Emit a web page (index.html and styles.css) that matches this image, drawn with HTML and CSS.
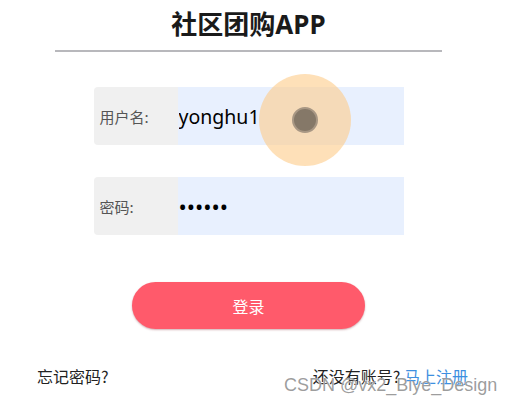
FILE: index.html
```html
<!DOCTYPE html>
<html lang="zh-CN">
<head>
    <meta charset="UTF-8">
    <meta name="viewport" content="width=device-width, initial-scale=1.0">
    <title>社区团购APP</title>
    <link rel="stylesheet" href="styles.css">
</head>
<body>
    <div class="page">
        <h1>社区团购APP</h1>
        <div class="divider"></div>

        <div class="form">
            <div class="field">
                <label for="username">用户名:</label>
                <input type="text" id="username" value="yonghu1">
            </div>
            <div class="field">
                <label for="password">密码:</label>
                <input type="password" id="password" value="123456">
            </div>
            <button class="login">登录</button>
        </div>

        <div class="footer">
            <span>忘记密码?</span>
            <span>还没有账号? <a href="#">马上注册</a></span>
        </div>
    </div>

    <div class="touch"><div class="dot"></div></div>
    <div class="watermark">CSDN @vx2_Biye_Design</div>
</body>
</html>
```

FILE: styles.css
```css
body {
    margin: 0;
    font-family: "Noto Sans", "Noto Sans CJK SC", sans-serif;
    color: #222;
    background: #fff;
}
.page {
    width: 497px;
}
h1 {
    margin: 0;
    padding-top: 7px;
    font-size: 26px;
    line-height: 34px;
    text-align: center;
    color: #1a1a1a;
}
.divider {
    margin: 9px 55px 0;
    border-top: 2px solid #b8b8bc;
}
.form {
    width: 310px;
    margin: 35px auto 0;
}
.field {
    display: flex;
    height: 58px;
    margin-bottom: 32px;
}
.field label {
    flex: 0 0 84px;
    box-sizing: border-box;
    padding-left: 6px;
    display: flex;
    align-items: center;
    background-color: #f0f0f0;
    border-radius: 4px 0 0 4px;
    font-family: "Noto Sans CJK SC", sans-serif;
    font-size: 15px;
    color: #555;
}
.field input {
    flex: 1;
    min-width: 0;
    width: 0;
    border: none;
    outline: none;
    margin: 0;
    padding: 0 1px;
    background-color: #e8f0fe;
    font-family: "Noto Sans", "Noto Sans CJK SC", sans-serif;
    font-size: 19.5px;
    color: #000;
}
.field input[type="password"] {
    font-size: 22px;
    letter-spacing: 0;
}
.login {
    display: block;
    width: 233px;
    height: 47px;
    margin: 47px auto 0;
    border: none;
    border-radius: 24px;
    background-color: #ff5a6b;
    box-shadow: 0 1px 2px rgba(120, 30, 40, 0.35);
    color: #fff;
    font-family: "Noto Sans CJK SC", sans-serif;
    font-size: 16px;
}
.footer {
    display: flex;
    justify-content: space-between;
    padding: 35px 29px 0 37px;
    font-family: "Noto Sans CJK SC", sans-serif;
    font-size: 16px;
    color: #222;
}
.footer a {
    color: #3d8fe0;
    text-decoration: none;
}
.touch {
    position: absolute;
    left: 259px;
    top: 74px;
    width: 92px;
    height: 92px;
    border-radius: 50%;
    background-color: rgba(253, 205, 140, 0.62);
    display: flex;
    align-items: center;
    justify-content: center;
}
.dot {
    width: 22px;
    height: 22px;
    border-radius: 50%;
    background-color: #857868;
    border: 2px solid #a89784;
}
.watermark {
    position: absolute;
    left: 284px;
    top: 375px;
    font-family: "Liberation Sans", sans-serif;
    font-size: 18px;
    color: rgba(140, 140, 140, 0.85);
    text-shadow: 0 0 1px #fff;
}
```
